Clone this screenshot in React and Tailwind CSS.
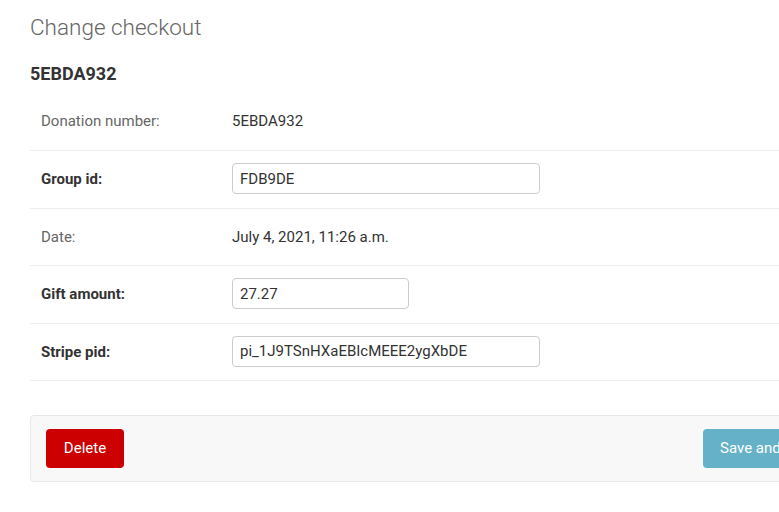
import React from 'react';

const rows = [
  { label: 'Donation number:', value: '5EBDA932', readonly: true, h: 'h-[58px]' },
  { label: 'Group id:', value: 'FDB9DE', input: 'w-[308px]', h: 'h-[58px]' },
  { label: 'Date:', value: 'July 4, 2021, 11:26 a.m.', readonly: true, h: 'h-[57px]' },
  { label: 'Gift amount:', value: '27.27', input: 'w-[177px]', h: 'h-[58px]' },
  { label: 'Stripe pid:', value: 'pi_1J9TSnHXaEBIcMEEE2ygXbDE', input: 'w-[308px]', h: 'h-[57px]' },
];

const FieldRow = ({ row }) => (
  <div className={`flex items-center border-b border-[#eee] pl-[11px] ${row.h}`}>
    <div
      className={`w-[191px] shrink-0 text-[15px] ${
        row.readonly ? 'text-[#666]' : 'font-bold text-[#333]'
      }`}
    >
      {row.label}
    </div>
    {row.readonly ? (
      <div className="text-[15px] text-[#333]">{row.value}</div>
    ) : (
      <input
        type="text"
        defaultValue={row.value}
        className={`${row.input} mb-[2px] h-[31px] rounded-[4px] border border-[#ccc] bg-white px-[7px] text-[15px] text-[#333] outline-none`}
      />
    )}
  </div>
);

export default function App() {
  return (
    <div
      className="w-[779px] h-[512px] overflow-hidden bg-white pl-[30px]"
      style={{ fontFamily: 'Roboto, "Liberation Sans", sans-serif' }}
    >
      <h1 className="pt-[12px] text-[22.5px] font-light leading-[30px] text-[#666]">
        Change checkout
      </h1>
      <h2 className="mt-[22px] text-[18px] font-bold leading-[20px] text-[#333]">5EBDA932</h2>

      <div className="mt-[9px] w-[1000px]">
        {rows.map((row) => (
          <FieldRow key={row.label} row={row} />
        ))}
      </div>

      <div className="mt-[34px] flex w-[1000px] items-center rounded-[4px] border border-[#e8e8e8] bg-[#f8f8f8] px-[15px] py-[13px]">
        <button className="h-[39px] w-[78px] shrink-0 rounded-[4px] bg-[#cc0000] text-[15px] text-white">
          Delete
        </button>
        <div className="ml-[579px] flex shrink-0 gap-[10px]">
          <button className="h-[39px] whitespace-nowrap rounded-[4px] bg-[#65b1c8] px-[17px] text-[15px] text-white">
            Save and add another
          </button>
          <button className="h-[39px] whitespace-nowrap rounded-[4px] bg-[#65b1c8] px-[17px] text-[15px] text-white">
            Save and continue editing
          </button>
        </div>
      </div>
    </div>
  );
}
